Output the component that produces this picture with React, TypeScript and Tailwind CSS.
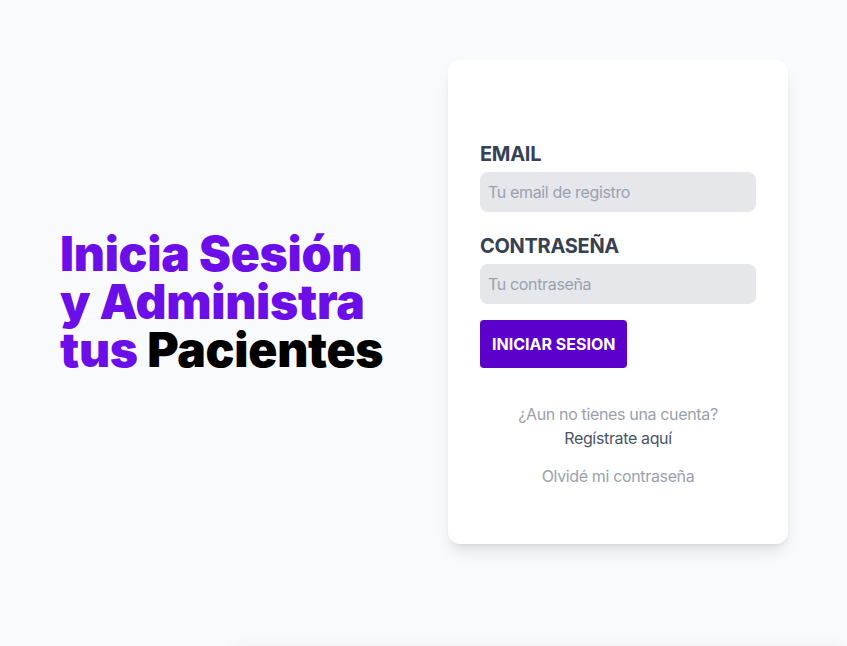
const font = { fontFamily: 'Inter, "Liberation Sans", sans-serif' };

export default function App() {
  return (
    <div className="min-h-screen bg-gray-50 overflow-hidden" style={font}>
      <main className="flex items-center justify-between pl-[60px] pr-[59px] pt-[60px]">
        <h1 className="text-[48px] leading-[48px] font-black text-[#6b0ee8] tracking-[-0.25px]">
          Inicia Sesión
          <br />y Administra
          <br />tus <span className="text-black">Pacientes</span>
        </h1>

        <div className="w-[340px] bg-white rounded-xl shadow-lg px-8 pt-20 pb-14">
          <form>
            <div>
              <label className="block text-xl font-bold uppercase text-gray-700 tracking-[-0.3px]">Email</label>
              <input
                type="email"
                placeholder="Tu email de registro"
                className="mt-1 w-full rounded-lg bg-gray-200 px-2 py-2 text-base tracking-[-0.35px] placeholder-gray-400 outline-none"
              />
            </div>
            <div className="mt-5">
              <label className="block text-xl font-bold uppercase text-gray-700 tracking-[-0.3px]">Contraseña</label>
              <input
                type="password"
                placeholder="Tu contraseña"
                className="mt-1 w-full rounded-lg bg-gray-200 px-2 py-2 text-base tracking-[-0.35px] placeholder-gray-400 outline-none"
              />
            </div>
            <button
              type="button"
              className="mt-4 rounded bg-[#5b01cb] px-3 py-3 text-base font-bold uppercase text-white"
            >
              Iniciar Sesion
            </button>
          </form>

          <nav className="mt-[34px] text-center text-base tracking-[-0.35px]">
            <p className="text-gray-400">¿Aun no tienes una cuenta?</p>
            <a className="block text-gray-600">Regístrate aquí</a>
            <a className="mt-[14px] block text-gray-400">Olvidé mi contraseña</a>
          </nav>
        </div>
      </main>

      <div className="ml-[230px] mt-[104px] h-40 rounded-xl bg-white shadow-[0_-2px_14px_rgba(0,0,0,0.05)]" />
    </div>
  );
}
